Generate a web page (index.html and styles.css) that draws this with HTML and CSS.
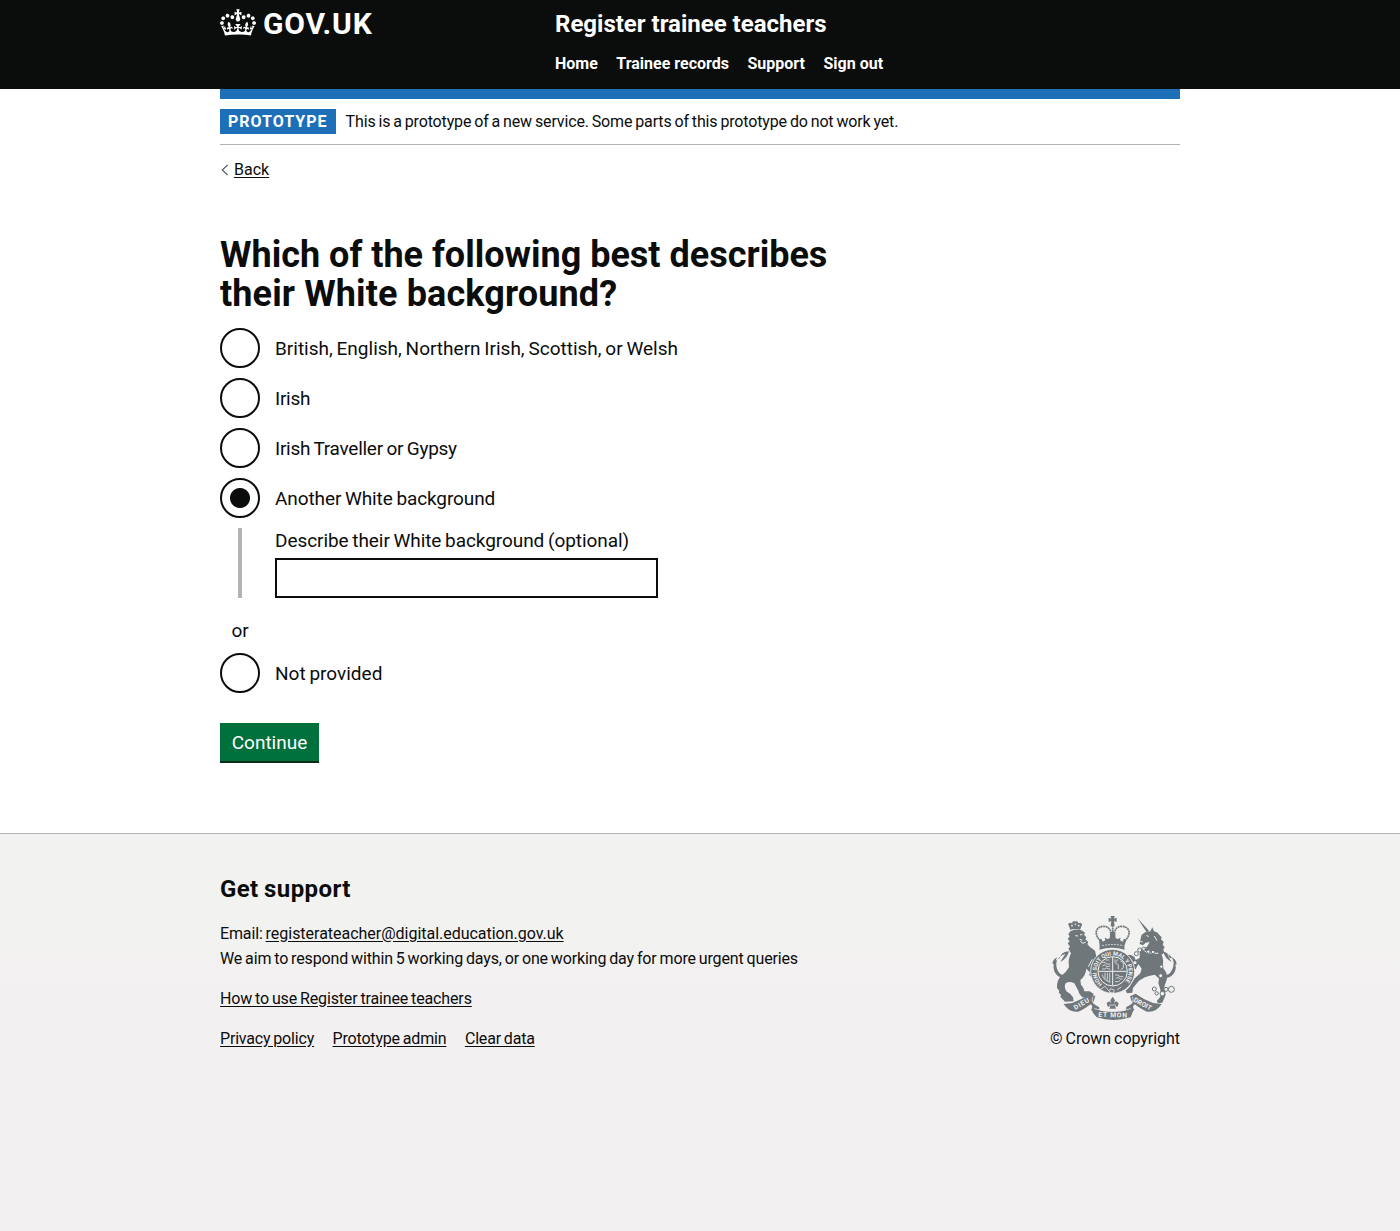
FILE: index.html
```html
<!DOCTYPE html>
<html lang="en">
<head>
<meta charset="utf-8">
<title>Register trainee teachers</title>
<link rel="stylesheet" href="styles.css">
</head>
<body>
<header class="header">
  <div class="container header-inner">
    <a class="logo" href="#">
      <svg class="crown" viewBox="0 0 132 97" width="36" height="27" aria-hidden="true"><path fill="currentColor" d="M25 30.2c3.5 1.5 7.7-.2 9.1-3.7 1.5-3.6-.2-7.8-3.9-9.2-3.6-1.4-7.6.3-9.1 3.9-1.4 3.5.3 7.5 3.9 9zM9 39.5c3.6 1.5 7.8-.2 9.2-3.7 1.5-3.6-.2-7.8-3.9-9.1-3.6-1.5-7.6.2-9.1 3.8-1.4 3.5.3 7.5 3.8 9zM4.4 57.2c3.5 1.5 7.7-.2 9.1-3.8 1.5-3.6-.2-7.7-3.9-9.1-3.5-1.5-7.6.3-9.1 3.8-1.4 3.5.3 7.6 3.9 9.1zm38.3-21.4c3.5 1.5 7.7-.2 9.1-3.8 1.5-3.6-.2-7.7-3.9-9.1-3.6-1.5-7.6.3-9.1 3.8-1.3 3.6.4 7.7 3.9 9.1zm64.4-5.6c-3.6 1.5-7.8-.2-9.1-3.7-1.5-3.6.2-7.8 3.8-9.2 3.6-1.4 7.7.3 9.2 3.9 1.3 3.5-.4 7.5-3.9 9zm15.9 9.3c-3.6 1.5-7.7-.2-9.1-3.7-1.5-3.6.2-7.8 3.7-9.1 3.6-1.5 7.7.2 9.2 3.8 1.5 3.5-.3 7.5-3.8 9zm4.7 17.7c-3.6 1.5-7.8-.2-9.2-3.8-1.5-3.6.2-7.7 3.9-9.1 3.6-1.5 7.7.3 9.2 3.8 1.3 3.5-.4 7.6-3.9 9.1zM89.3 35.8c-3.6 1.5-7.8-.2-9.2-3.8-1.4-3.6.2-7.7 3.9-9.1 3.6-1.5 7.7.3 9.2 3.8 1.4 3.6-.3 7.7-3.9 9.1zM69.7 17.7l8.9 4.7V9.3l-8.9 2.8c-.2-.3-.5-.6-.9-.9L72.4 0H59.6l3.5 11.2c-.3.3-.6.5-.9.9l-8.8-2.8v13.1l8.8-4.7c.3.3.6.7.9.9l-5 15.4v.1c-.2.8-.4 1.6-.4 2.4 0 4.1 3.1 7.5 7 8.1h.2c.3 0 .7.1 1 .1.4 0 .7 0 1-.1h.2c4-.6 7.1-4.1 7.1-8.1 0-.8-.1-1.7-.4-2.4V34l-5.1-15.4c.4-.2.7-.6 1-.9zM66 92.8c16.9 0 32.8 1.1 47.1 3.2 4-16.9 8.9-26.7 14-33.5l-9.6-3.4c1 4.9 1.1 7.2 0 10.2-1.5-1.4-3-4.3-4.2-8.7L108.6 76c2.8-2 5-3.2 7.5-3.3-4.4 9.4-10 11.9-13.6 11.2-4.3-.8-6.3-4.6-5.6-7.9 1-4.7 5.7-5.9 8-.5 4.3-8.7-3-11.4-7.6-8.8 7.1-7.2 7.9-13.5 2.1-21.1-8 6.1-8.1 12.3-4.5 20.8-4.7-5.4-12.1-2.5-9.5 6.2 3.4-5.2 7.9-2 7.2 3.1-.6 4.3-6.4 7.8-13.5 7.2-10.3-.9-10.9-8-11.2-13.8 2.5-.5 7.1 1.8 11 7.3L80.2 60c-4.1 4.4-8 5.3-12.3 5.4 1.4-4.4 8-11.6 8-11.6H55.5s6.4 7.2 7.9 11.6c-4.2-.1-8-1-12.3-5.4l1.4 16.4c3.9-5.5 8.5-7.7 10.9-7.3-.3 5.8-.9 12.8-11.1 13.8-7.2.6-12.9-2.9-13.5-7.2-.7-5 3.8-8.3 7.1-3.1 2.7-8.7-4.6-11.6-9.4-6.2 3.7-8.5 3.6-14.7-4.6-20.8-5.8 7.6-5 13.9 2.2 21.1-4.7-2.6-11.9.1-7.7 8.8 2.3-5.5 7.1-4.2 8.1.5.7 3.3-1.3 7.1-5.7 7.9-3.5.7-9-1.8-13.5-11.2 2.5.1 4.7 1.3 7.5 3.3l-4.7-15.4c-1.2 4.4-2.7 7.2-4.3 8.7-1.1-3-.9-5.3 0-10.2l-9.5 3.4c5 6.9 9.9 16.7 14 33.5 14.8-2.1 30.8-3.2 47.7-3.2z"/></svg>
      <span class="logotype">GOV.UK</span>
    </a>
    <div class="header-content">
      <a class="service" href="#">Register trainee teachers</a>
      <nav class="nav">
        <a href="#">Home</a>
        <a href="#">Trainee records</a>
        <a href="#">Support</a>
        <a href="#">Sign out</a>
      </nav>
    </div>
  </div>
</header>
<div class="container">
  <div class="bar"></div>
  <div class="phase">
    <strong class="tag">PROTOTYPE</strong>
    <span>This is a prototype of a new service. Some parts of this prototype do not work yet.</span>
  </div>
  <a class="back" href="#">
    <svg width="9" height="12" viewBox="0 0 9 12" aria-hidden="true"><path d="M7.6 1 2.200 6l5.4 5" fill="none" stroke="#505a5f" stroke-width="1.1"/></svg>
    <span class="back-text">Back</span>
  </a>
  <main class="main">
    <h1 class="title">Which of the following best describes<br><span class="title-end">their White background?</span></h1>
    <form class="radios">
      <label class="radio wide"><span class="dot"></span>British, English, Northern Irish, Scottish, or Welsh</label>
      <label class="radio tight"><span class="dot"></span>Irish</label>
      <label class="radio tight"><span class="dot"></span>Irish Traveller or Gypsy</label>
      <label class="radio"><span class="dot checked"></span>Another White background</label>
      <div class="conditional">
        <label class="field-label" for="describe">Describe their White background (optional)</label>
        <input class="input" id="describe" type="text">
      </div>
      <div class="divider">or</div>
      <label class="radio wide"><span class="dot"></span>Not provided</label>
      <button class="button" type="button">Continue</button>
    </form>
  </main>
</div>
<footer class="footer">
  <div class="container footer-inner">
    <div class="support">
      <h2 class="footer-title">Get support</h2>
      <p class="line">Email: <a href="#" class="email">registerateacher@digital.education.gov.uk</a></p>
      <p class="line">We aim to respond within 5 working days, or one working day for more urgent queries</p>
      <p class="line spaced"><a href="#">How to use Register trainee teachers</a></p>
      <p class="line spaced links"><a href="#">Privacy policy</a><a href="#">Prototype admin</a><a href="#">Clear data</a></p>
    </div>
    <a class="copyright" href="#">
      <svg class="arms" width="130" height="105" viewBox="31 17 390 315" aria-hidden="true">
        <!-- lion -->
        <g class="fill">
          <path d="M92 62 88 50q-5-6 1-9 4-2 8 1l3-6h13l3 6q5-3 9 0 5 4 0 9l-4 12-4-4-20 1z"/>
          <path d="M92 66Q110 56 128 64L136 70 133 76 140 84 137 90 146 98 143 104 150 112 166 124 172 150 162 170 164 196 154 202 148 196 152 190 140 178Q138 200 122 212L124 226Q134 236 134 246L150 246 162 254 158 262 128 264Q118 256 116 244L104 222Q88 214 78 222 72 232 80 246 92 252 100 264L102 276 76 277 62 262 64 256 57 250 59 244 52 236Q50 214 64 200 80 190 88 174 84 150 94 132L86 118 91 112 84 102 90 96 84 88 90 82 86 74z"/>
          <path d="M60 146Q66 126 88 126 84 146 62 158 72 140 78 134 54 140 50 160 48 180 62 194L76 200 72 208Q52 204 44 186 34 160 60 146zM38 162Q40 150 52 144L44 166z"/>
        </g>
        <path class="line-gap" d="M122 96l8 6 8-4M107 79l8 1M121 77l7-2M120 90l8 3M158 150l-12 22"/>
        <circle class="gap" cx="97" cy="49" r="2.5"/><circle class="gap" cx="107" cy="45" r="2.5"/><circle class="gap" cx="117" cy="49" r="2.5"/>
        <!-- unicorn -->
        <g class="fill">
          <path d="m293 26 35 38-7 5z"/>
          <path d="M306 76 318 68 332 66 338 54 343 66Q354 68 360 78L366 84 364 90 372 98 369 106 375 114 371 120 374 130 366 136Q374 156 368 172L380 190 382 208 374 232 378 256 368 280 354 282 352 274 362 262 362 240 356 222 358 208 346 196Q330 198 316 204L298 214 280 236 278 250 262 252 258 244 270 232 284 208 302 192 306 178 296 164 288 180 276 176 274 168 280 158 272 146 262 146 262 138 272 136 284 142 288 152 300 146 300 130 310 118 322 112 330 98 318 100 310 108 300 104 302 92z"/>
          <path d="M390 146Q384 126 372 128 374 146 396 158 384 140 384 134 400 142 402 160 402 180 388 194L376 198 380 206Q398 204 406 186 414 168 396 146zM411 165Q410 152 398 144L404 166z"/>
        </g>
        <path class="line-gap" d="M304 116 322 130 356 132M320 79l7 2M344 80l8 14M302 96l7 2"/>
        <g class="chain"><circle cx="300" cy="122" r="6"/><circle cx="290" cy="133" r="6"/><circle cx="312" cy="118" r="5"/><circle cx="326" cy="127" r="5"/><circle cx="340" cy="128" r="5"/><circle cx="286" cy="160" r="6"/><circle cx="365" cy="172" r="5"/><circle cx="363" cy="199" r="6"/><circle cx="344" cy="239" r="6"/><circle cx="351" cy="252" r="5"/><circle cx="368" cy="253" r="7"/><circle cx="379" cy="240" r="6"/><circle cx="395" cy="240" r="9"/></g>
        <!-- royal crown -->
        <g class="fill">
          <path d="m213 20 12 0-2 8 8-3v13l-8-3 2 16h-12l2-16-8 3V25l8 3z"/>
          <path d="m178 91 7-3 4 9 8-4-2-8 9 4 6-2 2-15 7-9 7 9 2 15 6 2 9-4-2 8 8 4 4-9 7 3-6 20 1 10q-38-11-76 0l1-10z"/>
        </g>
        <path class="beads" d="M183 95c-22-20-15-43 8-44 17 0 24 12 22 27M255 95c22-20 15-43-8-44-17 0-24 12-22 27M219 48v20"/>
        <path class="line-gap fine" d="M187 109q32-7 64 0" stroke-dasharray="6 3"/>
        <!-- garter and shield -->
        <circle class="garter" cx="219" cy="186" r="66"/>
        <path id="garter" d="M189 224A48 48 0 1 1 249 224" fill="none"/>
        <text class="motto ring"><textPath href="#garter">HONI SOIT QUI MAL Y PENSE</textPath></text>
        <circle class="thin" cx="219" cy="186" r="44"/>
        <path class="line-gap" d="M219 143v86M177 186h84"/>
        <path class="line-gap fine" d="M187 159h10l3 5h12M188 170l8-4 5 6 11-2M187 179h9l4-3 12 4M198 152h12M226 150v10l10 6v14M233 150l-2 8M242 155l9 5v16l-8 5M226 197h10l3 5h12M228 208l8-4 5 6 7-2M226 217h9l6-3M188 196q2 16 24 23M196 190v20M203 190v24M210 190v28"/>
        <path class="line-gap fine" d="m182 240 14-9 12 14M212 238l12 4-3 9-12-2zM232 241l13-8"/>
        <!-- ribbon -->
        <g class="fill">
          <path d="M72 284 98 281Q124 272 150 253L167 261 160 282 178 292 180 304 168 312 154 302Q162 292 153 285 130 302 116 307 88 310 72 284z"/>
          <path d="M366 284 340 281Q314 272 288 253L271 261 278 282 260 292 258 304 270 312 284 302Q276 292 285 285 308 302 322 307 350 310 366 284z"/>
          <path d="M165 300q54 15 108 0l7 6-7 18q-52 16-102 0l-13-16z"/>
          <path d="m219 262 7 11-3 9 6-6 8 5-3 11-8-2 3 8h-20l3-8-8 2-3-11 8-5 6 6-3-9z"/>
        </g>
        <path class="line-gap fine" d="M160 262q-10 18 18 30M278 262q10 18-18 30M164 298q55 16 110 0M209 287h20"/>
        <text class="motto" transform="translate(107 302) rotate(-30)" textLength="50">DIEU</text>
        <text class="motto" transform="translate(176 323) rotate(1)" textLength="86">ET MON</text>
        <text class="motto" transform="translate(280 276) rotate(28)" textLength="58">DROIT</text>
      </svg>
      <span>© Crown copyright</span>
    </a>
  </div>
</footer>
</body>
</html>
```
FILE: styles.css
```css
body{margin:0;background:#fff;color:#0b0c0c;font-family:Roboto,"Liberation Sans",sans-serif;font-size:16px;letter-spacing:-.14px;word-spacing:-.9px}
a{color:inherit;text-underline-offset:2px}
.container{width:960px;margin:0 auto}
.header{background:#0b0c0c;color:#fff;height:89px;font-weight:700;letter-spacing:0;word-spacing:0}
.header a{color:#fff;text-decoration:none}
.header-inner{display:flex}
.logo{display:flex;width:335px;padding-top:9px;gap:7px}
.logotype{font-size:30px;line-height:30px;letter-spacing:.8px}
.service{display:block;font-size:24px;line-height:30px;padding-top:9px}
.nav{display:flex;gap:18.5px;line-height:20px;padding-top:15px}
.bar{height:10px;background:#1d70b8}
.phase{display:flex;gap:10px;align-items:center;padding:10px 0;border-bottom:1px solid #b1b4b6}
.tag{background:#1d70b8;color:#fff;padding:0 8px;line-height:25px;letter-spacing:1px}
.back{display:flex;align-items:center;gap:5px;margin-top:15px;line-height:20px;text-decoration:none;letter-spacing:0}
.back-text{text-decoration:underline}
.main{padding:56px 0 72px}
.title{font-size:36px;line-height:39px;margin:0 0 14px;letter-spacing:0;word-spacing:0}
.title-end{letter-spacing:.12px}
.radios{display:flex;flex-direction:column;align-items:flex-start;font-size:19px;line-height:25px;letter-spacing:-.1px}
.radio{display:flex;gap:15px;align-items:center;margin-bottom:10px}
.wide{letter-spacing:0}
.tight{letter-spacing:-.26px}
.dot{box-sizing:border-box;width:40px;height:40px;border:2px solid #0b0c0c;border-radius:50%}
.checked{background:radial-gradient(circle,#0b0c0c 9.5px,#fff 10.5px)}
.conditional{margin:0 0 20px 18px;border-left:4px solid #b1b4b6;padding-left:33px}
.field-label{display:block;margin-bottom:5px;letter-spacing:-.07px}
.input{box-sizing:border-box;display:block;width:383px;height:40px;border:2px solid #0b0c0c}
.divider{width:40px;text-align:center;margin-bottom:10px}
.button{margin-top:20px;width:99px;height:38px;padding:0;border:0;background:#00703c;color:#fff;box-shadow:0 2px 0 #002d18;font:inherit}
.footer{border-top:1px solid #b1b4b6;background:linear-gradient(#f2f2f0 110px,#f3f0f2 150px);height:397px}
.footer-inner{display:flex;justify-content:space-between;align-items:flex-end;padding-top:40px}
.footer-title{font-size:24px;line-height:30px;margin:0 0 17px;letter-spacing:.4px}
.line{margin:0;line-height:25px}
.email{letter-spacing:-.02px}
.spaced{margin-top:15px}
.links{display:flex;gap:18.5px}
.links a{letter-spacing:-.18px}
.copyright{display:flex;flex-direction:column;gap:6px;width:130px;line-height:25px;text-decoration:none;white-space:nowrap;letter-spacing:-.04px}
.arms{display:block}
.fill{fill:#6f777b}
.garter{fill:#6f777b;stroke:#f2f1f1;stroke-width:2.5}
.gap{fill:#f2f1f1}
.line-gap{fill:none;stroke:#f2f1f1;stroke-width:3}
.fine{stroke-width:2.2}
.thin{fill:none;stroke:#f2f1f1;stroke-width:3}
.chain{fill:#f2f1f1;stroke:#6f777b;stroke-width:3}
.beads{fill:none;stroke:#6f777b;stroke-width:5;stroke-dasharray:6 1.5}
.motto{fill:#f2f1f1;font:700 20px Roboto,sans-serif;word-spacing:0;letter-spacing:0}
.ring{font-size:17px}
```
